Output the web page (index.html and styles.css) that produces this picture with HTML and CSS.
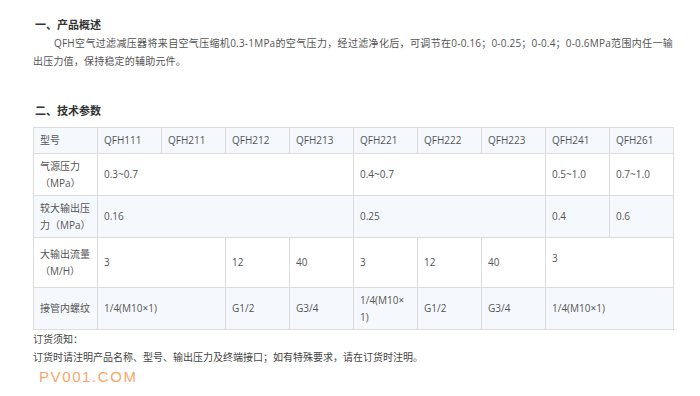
FILE: index.html
```html
<!DOCTYPE html>
<html lang="zh-CN">
<head>
<meta charset="utf-8">
<title>QFH空气过滤减压器</title>
<link rel="stylesheet" href="styles.css">
</head>
<body>
<div class="page">
  <h2 class="title first">一、产品概述</h2>
  <p class="intro">QFH空气过滤减压器将来自空气压缩机0.3-1MPa的空气压力，经过滤净化后，可调节在0-0.16；0-0.25；0-0.4；0-0.6MPa范围内任一输出压力值，保持稳定的辅助元件。</p>

  <h2 class="title second">二、技术参数</h2>
  <table class="spec">
    <colgroup>
      <col class="c"><col class="c"><col class="c"><col class="c"><col class="c">
      <col class="c"><col class="c"><col class="c"><col class="c"><col class="c">
    </colgroup>
    <tr class="head">
      <td>型号</td><td>QFH111</td><td>QFH211</td><td>QFH212</td><td>QFH213</td>
      <td>QFH221</td><td>QFH222</td><td>QFH223</td><td>QFH241</td><td>QFH261</td>
    </tr>
    <tr class="row">
      <td>气源压力（MPa）</td>
      <td colspan="4">0.3~0.7</td>
      <td colspan="3">0.4~0.7</td>
      <td>0.5~1.0</td>
      <td>0.7~1.0</td>
    </tr>
    <tr class="row alt">
      <td>较大输出压力（MPa）</td>
      <td colspan="4">0.16</td>
      <td colspan="3">0.25</td>
      <td>0.4</td>
      <td>0.6</td>
    </tr>
    <tr class="row">
      <td>大输出流量（M/H）</td>
      <td colspan="2">3</td>
      <td>12</td>
      <td>40</td>
      <td>3</td>
      <td>12</td>
      <td>40</td>
      <td colspan="2" class="raised">3</td>
    </tr>
    <tr class="row alt">
      <td>接管内螺纹</td>
      <td colspan="2">1/4(M10×1)</td>
      <td>G1/2</td>
      <td>G3/4</td>
      <td>1/4(M10×<br>1)</td>
      <td>G1/2</td>
      <td>G3/4</td>
      <td colspan="2">1/4(M10×1)</td>
    </tr>
  </table>
  <p class="note">订货须知：</p>
  <p class="note">订货时请注明产品名称、型号、输出压力及终端接口；如有特殊要求，请在订货时注明。</p>
  <div class="brand">PV001.COM</div>
</div>
</body>
</html>
```

FILE: styles.css
```css
html, body {
  margin: 0;
  padding: 0;
  background: #ffffff;
}

.page {
  padding: 16px 27px 0 33px;
  font-family: "Open Sans", "Noto Sans CJK SC", sans-serif;
  font-size: 10px;
  color: #555555;
}

.title {
  margin: 0;
  font-size: 11px;
  line-height: 18px;
  font-weight: bold;
  color: #333333;
  padding-left: 2px;
}

.title.second {
  margin-top: 32px;
  margin-bottom: 7px;
}

.intro {
  margin: 0;
  line-height: 18px;
  text-indent: 21px;
  letter-spacing: 0.2px;
  text-align: justify;
}

.spec {
  width: 640px;
  border-collapse: collapse;
  table-layout: fixed;
}

.spec .c {
  width: 64px;
}

.spec td {
  border: 1px solid #dcdcdc;
  padding: 1px 6px;
  line-height: 17px;
  vertical-align: middle;
  color: #555555;
}

.spec .head td {
  height: 23px;
  background: #f5f9fd;
}

.spec .row td {
  height: 39px;
}

.spec .alt td {
  background: #f5f9fd;
}

.spec td.raised {
  padding-bottom: 9px;
}

.note {
  margin: 0;
  line-height: 18px;
  color: #444444;
}

.brand {
  font-family: "Liberation Sans", Arial, sans-serif;
  font-size: 15px;
  line-height: 22px;
  letter-spacing: 1.6px;
  color: #f8a46c;
  padding-left: 6px;
}
```
